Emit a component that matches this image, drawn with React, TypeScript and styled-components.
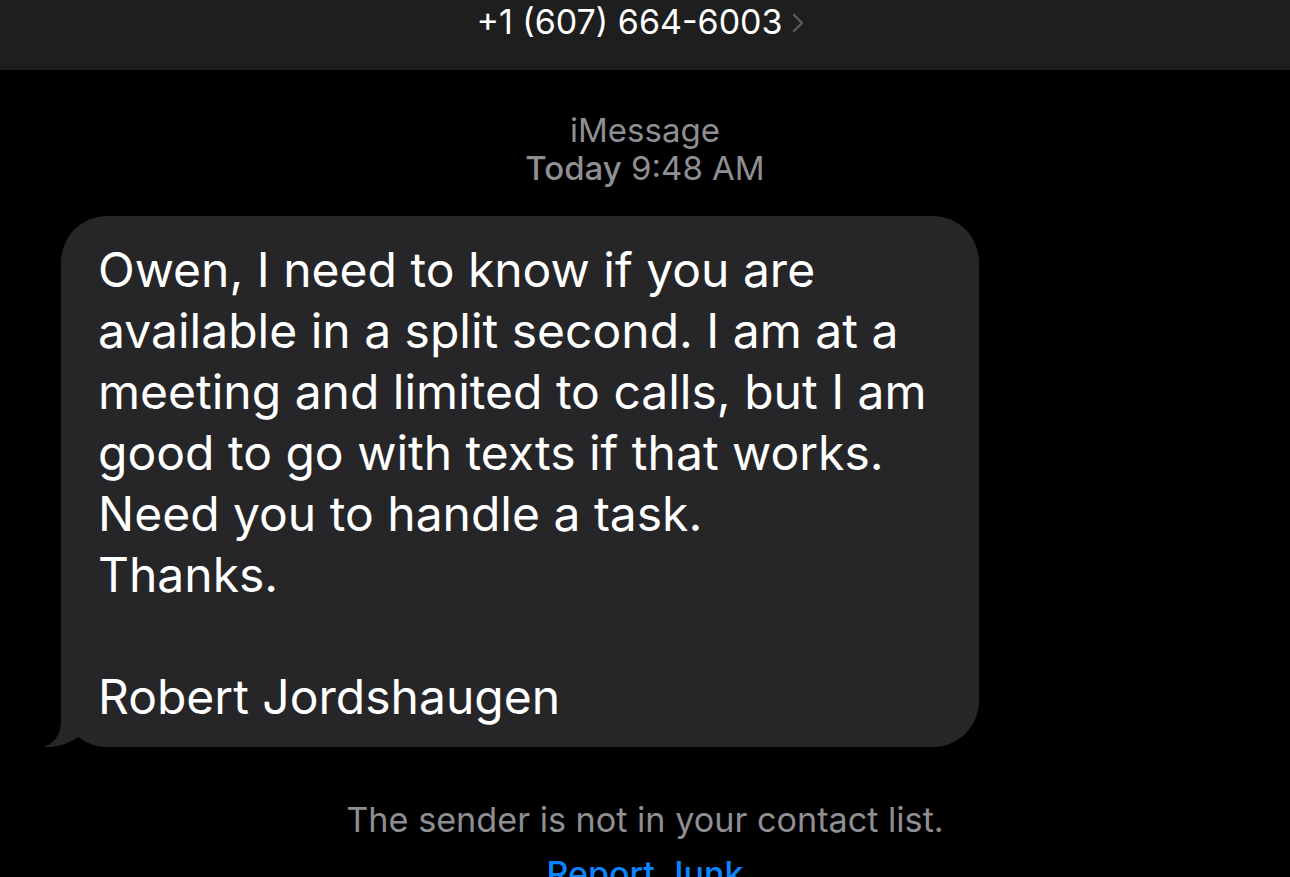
import React from "react";
import styled, { createGlobalStyle } from "styled-components";

const Global = createGlobalStyle`
  html, body { margin: 0; padding: 0; background: #000; }
  body { font-family: Inter, "Noto Sans", "Liberation Sans", sans-serif; -webkit-font-smoothing: antialiased; }
`;

const Screen = styled.div`
  width: 1290px;
  height: 877px;
  overflow: hidden;
  background: #000;
  display: flex;
  flex-direction: column;
`;

const Header = styled.header`
  height: 70px;
  flex: none;
  background: #1e1e1f;
  display: flex;
  justify-content: center;
  align-items: flex-start;
`;

const Title = styled.div`
  display: flex;
  align-items: center;
  gap: 9px;
  color: #fff;
  font-size: 34px;
  line-height: 44px;
  margin-right: 10px;
`;

const Chevron = styled.svg`
  width: 12px;
  height: 20px;
  margin-top: 2px;
`;

const Body = styled.main`
  display: flex;
  flex-direction: column;
  align-items: center;
  padding-top: 41px;
`;

const Meta = styled.div`
  color: #8e8e93;
  font-size: 33px;
  line-height: 38px;
  text-align: center;
`;

const Strong = styled.span`
  font-weight: 500;
`;

const Row = styled.div`
  align-self: stretch;
  display: flex;
  padding-left: 61px;
  margin-top: 29px;
`;

const Bubble = styled.div`
  position: relative;
  width: 918px;
  box-sizing: border-box;
  background: #262629;
  border-radius: 46px;
  padding: 23px 20px 20px 37px;
  color: #fff;
  font-size: 48px;
  line-height: 61px;
  white-space: pre-line;
`;

const MessageText = styled.span`
  position: relative;
  z-index: 1;
`;

const Tail = styled.svg`
  position: absolute;
  left: -18px;
  bottom: 0;
  width: 72px;
  height: 47px;
  z-index: 0;
`;

const Notice = styled.div`
  color: #8e8e93;
  font-size: 34.2px;
  line-height: 40px;
  margin-top: 53px;
`;

const Link = styled.div`
  color: #0a84ff;
  font-size: 34px;
  line-height: 40px;
  margin-top: 14px;
  font-weight: 500;
`;

const message = `Owen, I need to know if you are
available in a split second. I am at a
meeting and limited to calls, but I am
good to go with texts if that works.
Need you to handle a task.
Thanks.

Robert Jordshaugen`;

export default function App() {
  return (
    <Screen>
      <Global />
      <Header>
        <Title>
          +1 (607) 664-6003
          <Chevron viewBox="0 0 12 20">
            <path d="M2 2 L10 10 L2 18" fill="none" stroke="#5b5b5f" strokeWidth="2.4" strokeLinecap="round" strokeLinejoin="round" />
          </Chevron>
        </Title>
      </Header>
      <Body>
        <Meta>
          iMessage
          <br />
          <Strong>Today</Strong> 9:48 AM
        </Meta>
        <Row>
          <Bubble>
            <Tail viewBox="0 0 72 47">
              <path
                d="M18 0 L18 20 C18 35 11 44 0 47 C12 48 26 44 35 37 C45 44 58 47 72 47 L72 0 Z"
                fill="#262629"
              />
            </Tail>
            <MessageText>{message}</MessageText>
          </Bubble>
        </Row>
        <Notice>The sender is not in your contact list.</Notice>
        <Link>Report Junk</Link>
      </Body>
    </Screen>
  );
}
